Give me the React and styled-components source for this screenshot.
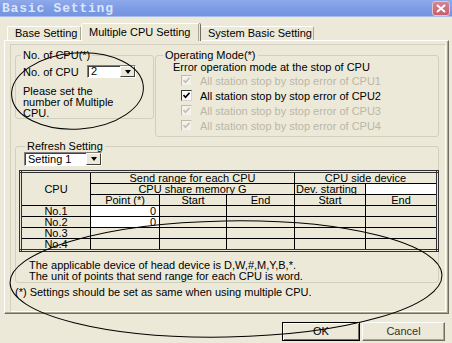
import React from 'react';
import styled, { createGlobalStyle } from 'styled-components';

const GlobalStyle = createGlobalStyle`
    * { box-sizing: border-box; }
    html, body {
        margin: 0;
        padding: 0;
        background: #ECE9D8;
    }
    body {
        font-family: "Liberation Sans", Arial, sans-serif;
        font-size: 11px;
        color: #000;
    }
`

const Window = styled.div`
    position: relative;
    width: 452px;
    height: 343px;
    background: #ECE9D8;
    overflow: hidden;
`

const TitleBar = styled.div`
    height: 17px;
    display: flex;
    align-items: center;
    justify-content: space-between;
    padding: 0 2px 0 2px;
    background: linear-gradient(180deg, #8FAAEA 0%, #7D9CE5 50%, #7594E0 100%);
    border-bottom: 1px solid #A8BDEE;
`

const Title = styled.span`
    font-family: "Liberation Mono", "DejaVu Sans Mono", monospace;
    font-weight: bold;
    font-size: 13px;
    letter-spacing: 0.8px;
    color: #DCE5FA;
`

const CloseButton = styled.div`
    width: 18px;
    height: 15px;
    border-radius: 3px;
    background: linear-gradient(180deg, #D58592 0%, #C4606E 100%);
    border: 1px solid #E6C4CA;
    display: flex;
    align-items: center;
    justify-content: center;
`

const TabRow = styled.div`
    display: flex;
    align-items: flex-end;
    height: 23px;
    padding-left: 7px;
`

const Tab = styled.div`
    position: relative;
    z-index: ${p => p.$active ? 2 : 1};
    width: ${p => p.$w}px;
    height: ${p => p.$active ? 18 : 14}px;
    margin-bottom: ${p => p.$active ? -1 : 0}px;
    padding-left: 7px;
    line-height: ${p => p.$active ? 16 : 13}px;
    background: #ECE9D8;
    border-top: 1px solid #fff;
    border-left: 1px solid #fff;
    border-right: 1px solid ${p => p.$sep ? '#ACA899' : 'transparent'};
    border-radius: 2px 2px 0 0;
    box-shadow: ${p => p.$active ? 'inset -1px 0 0 #ACA899, 1px 0 0 #716F64' : 'none'};
    white-space: nowrap;
`

const Panel = styled.div`
    margin: 0 3px 0 4px;
    height: 274px;
    border: 1px solid;
    border-color: #fff #716F64 #716F64 #fff;
    box-shadow: inset -1px -1px 0 #ACA899;
    padding: 3px 2px 1px 5px;
`

const Frame = styled.div`
    height: 100%;
    border: 1px solid;
    border-color: #D4D0C0 #fff #fff #D4D0C0;
    padding: 4px 6px 0 4px;
    display: flex;
    flex-direction: column;
`

const TopRow = styled.div`
    display: flex;
    align-items: flex-start;
    gap: 1px;
`

const Group = styled.fieldset`
    margin: ${p => p.$mt || 0}px 0 0 0;
    min-width: 0;
    width: ${p => p.$w}px;
    height: ${p => p.$h}px;
    padding: 0 0 0 ${p => p.$px}px;
    border: 1px solid #D0D0BF;
    border-radius: 3px;
`

const Legend = styled.legend`
    padding: 0 2px;
    margin-left: ${p => p.$ml}px;
    line-height: 12px;
    font-size: 11px;
`

const FieldRow = styled.div`
    display: flex;
    align-items: center;
    margin-top: 4px;
    height: 13px;
`

const FieldLabel = styled.span`
    width: 64px;
    white-space: nowrap;
`

const SelectBox = styled.div`
    display: flex;
    width: ${p => p.$w}px;
    height: ${p => p.$h}px;
    margin-left: ${p => p.$ml || 0}px;
    background: #fff;
    border: 1px solid;
    border-color: #808080 #fff #fff #808080;
    box-shadow: inset 1px 1px 0 #404040;
`

const SelectValue = styled.span`
    flex: 1;
    padding-left: 3px;
    line-height: ${p => p.$lh}px;
    white-space: nowrap;
`

const DropButton = styled.span`
    width: 15px;
    height: 100%;
    background: #ECE9D8;
    border: 1px solid;
    border-color: #fff #404040 #404040 #fff;
    display: flex;
    align-items: center;
    justify-content: center;
`

const Arrow = styled.span`
    width: 0;
    height: 0;
    border-left: 3.5px solid transparent;
    border-right: 3.5px solid transparent;
    border-top: 4px solid #000;
`

const Hint = styled.div`
    margin-top: 8px;
    line-height: 11px;
`

const ModeBody = styled.div`
    padding-left: 9px;
`

const ModeCaption = styled.div`
    height: 12px;
    line-height: 12px;
    white-space: nowrap;
`

const CheckRow = styled.div`
    display: flex;
    align-items: center;
    gap: 8px;
    height: 15px;
    margin-left: 8px;
    color: ${p => p.$disabled ? '#BAB7A9' : '#000'};
    white-space: nowrap;
`

const Box = styled.span`
    flex: none;
    width: 11px;
    height: 11px;
    display: flex;
    align-items: center;
    justify-content: center;
    border: 1px solid;
    border-color: ${p => p.$disabled ? '#BDBBAD #EAE8DE #EAE8DE #BDBBAD' : '#3A3A3A #D8D4C8 #D8D4C8 #3A3A3A'};
    background: ${p => p.$disabled ? '#F4F2EA' : '#fff'};
`

const Grid = styled.table`
    margin-top: 4px;
    width: 417px;
    table-layout: fixed;
    border-collapse: collapse;
    border: 3px double #303030;
    font-size: 11px;
`

const Cell = styled.td`
    height: 10px;
    padding: 0 ${p => p.$align === 'right' ? 3 : 1}px 0 1px;
    border: 1px solid #000;
    line-height: 10px;
    text-align: ${p => p.$align || 'center'};
    background: ${p => p.$white ? '#fff' : 'transparent'};
    white-space: nowrap;
    overflow: hidden;
`

const Notes = styled.div`
    margin-top: 8px;
    padding-left: 10px;
    line-height: 11px;
`

const Footnote = styled.div`
    margin-top: 4px;
    line-height: 11px;
`

const Footer = styled.div`
    display: flex;
    justify-content: flex-end;
    gap: 2px;
    margin-top: 8px;
    padding-right: 7px;
`

const Button = styled.div`
    width: ${p => p.$w}px;
    height: 19px;
    line-height: 17px;
    text-align: center;
    color: ${p => p.$primary ? '#000' : '#333'};
    background: #ECE9D8;
    border: 1px solid;
    border-color: ${p => p.$primary ? '#000' : '#fff #716F64 #716F64 #fff'};
    box-shadow: ${p => p.$primary ? 'inset 1px 1px 0 #fff, inset -1px -1px 0 #716F64' : 'inset -1px -1px 0 #ACA899'};
`

const Overlay = styled.svg`
    position: absolute;
    left: 0;
    top: 0;
    pointer-events: none;
`

const modes = [
    { label: 'All station stop by stop error of CPU1', disabled: true },
    { label: 'All station stop by stop error of CPU2', disabled: false },
    { label: 'All station stop by stop error of CPU3', disabled: true },
    { label: 'All station stop by stop error of CPU4', disabled: true },
]

const cpuRows = [
    { name: 'No.1', point: '0' },
    { name: 'No.2', point: '0' },
    { name: 'No.3' },
    { name: 'No.4' },
]

const Check = ({ disabled }) => (
    <Box $disabled={disabled}>
        <svg width="7" height="7" viewBox="0 0 7 7">
            <polyline points="0.5,3 2.5,5.2 6.5,0.8" fill="none"
                stroke={disabled ? '#C2BFB0' : '#000'} strokeWidth="1.6" />
        </svg>
    </Box>
)

const Dropdown = ({ value, w, h, ml }) => (
    <SelectBox $w={w} $h={h} $ml={ml}>
        <SelectValue $lh={h - 2}>{value}</SelectValue>
        <DropButton><Arrow /></DropButton>
    </SelectBox>
)

const App = () => {
    return (
        <Window>
            <GlobalStyle />
            <TitleBar>
                <Title>Basic Setting</Title>
                <CloseButton>
                    <svg width="10" height="9" viewBox="0 0 10 9">
                        <path d="M1 1 L9 8 M9 1 L1 8" stroke="#fff" strokeWidth="2" />
                    </svg>
                </CloseButton>
            </TitleBar>
            <TabRow>
                <Tab $w={74} $sep>Base Setting</Tab>
                <Tab $w={119} $active>Multiple CPU Setting</Tab>
                <Tab $w={114} $sep>System Basic Setting</Tab>
            </TabRow>
            <Panel>
                <Frame>
                    <TopRow>
                        <Group $w={139} $h={70} $px={7}>
                            <Legend $ml={-2}>No. of CPU(*)</Legend>
                            <FieldRow>
                                <FieldLabel>No. of CPU</FieldLabel>
                                <Dropdown value="2" w={49} h={13} />
                            </FieldRow>
                            <Hint>
                                Please set the<br />
                                number of Multiple<br />
                                CPU.
                            </Hint>
                        </Group>
                        <Group $w={284} $h={88} $px={8}>
                            <Legend $ml={-1}>Operating Mode(*)</Legend>
                            <ModeBody>
                                <ModeCaption>Error operation mode at the stop of CPU</ModeCaption>
                                {
                                    modes.map((mode) => (
                                        <CheckRow key={mode.label} $disabled={mode.disabled}>
                                            <Check disabled={mode.disabled} />
                                            {mode.label}
                                        </CheckRow>
                                    ))
                                }
                            </ModeBody>
                        </Group>
                    </TopRow>
                    <Group $w={424} $h={143} $px={3} $mt={3}>
                        <Legend $ml={6}>Refresh Setting</Legend>
                        <Dropdown value="Setting 1" w={78} h={14} ml={5} />
                        <Grid>
                            <colgroup>
                                <col style={{ width: 70 }} />
                                <col style={{ width: 69 }} />
                                <col style={{ width: 67 }} />
                                <col style={{ width: 68 }} />
                                <col style={{ width: 71 }} />
                                <col style={{ width: 72 }} />
                            </colgroup>
                            <tbody>
                                <tr>
                                    <Cell rowSpan={3}>CPU</Cell>
                                    <Cell colSpan={3}>Send range for each CPU</Cell>
                                    <Cell colSpan={2}>CPU side device</Cell>
                                </tr>
                                <tr>
                                    <Cell colSpan={3}>CPU share memory G</Cell>
                                    <Cell $align="left">Dev. starting</Cell>
                                    <Cell $white />
                                </tr>
                                <tr>
                                    <Cell>Point (*)</Cell>
                                    <Cell>Start</Cell>
                                    <Cell>End</Cell>
                                    <Cell>Start</Cell>
                                    <Cell>End</Cell>
                                </tr>
                                {
                                    cpuRows.map((row) => (
                                        <tr key={row.name}>
                                            <Cell>{row.name}</Cell>
                                            <Cell $align="right" $white={!!row.point}>{row.point}</Cell>
                                            <Cell />
                                            <Cell />
                                            <Cell />
                                            <Cell />
                                        </tr>
                                    ))
                                }
                            </tbody>
                        </Grid>
                        <Notes>
                            The applicable device of head device is D,W,#,M,Y,B,*.<br />
                            The unit of points that send range for each CPU is word.
                        </Notes>
                    </Group>
                    <Footnote>(*) Settings should be set as same when using multiple CPU.</Footnote>
                </Frame>
            </Panel>
            <Footer>
                <Button $w={78} $primary>OK</Button>
                <Button $w={83}>Cancel</Button>
            </Footer>
            <Overlay width="452" height="343" viewBox="0 0 452 343">
                <ellipse cx="77.5" cy="91" rx="66" ry="38" transform="rotate(-4 77.5 91)"
                    fill="none" stroke="#000" strokeWidth="1" />
                <ellipse cx="226" cy="279" rx="216" ry="58" transform="rotate(-1 226 279)"
                    fill="none" stroke="#000" strokeWidth="1" />
            </Overlay>
        </Window>
    )
}

export default App;
